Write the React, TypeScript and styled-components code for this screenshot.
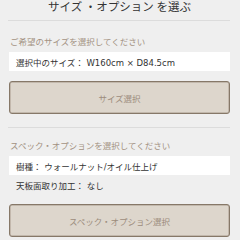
import React from "react";
import styled, { createGlobalStyle } from "styled-components";

const Global = createGlobalStyle`
  html, body { margin: 0; padding: 0; background: #efefef; }
  body { font-family: "Noto Sans CJK JP", "Noto Sans", sans-serif; }
`;

const Page = styled.div`
  width: 240px;
  height: 240px;
  overflow: hidden;
  background: #efefef;
  padding: 0 10px 0 9px;
  box-sizing: border-box;
`;

const Title = styled.h1`
  margin: 0;
  font-size: 11.5px;
  line-height: 13px;
  font-weight: 400;
  color: #333;
  text-align: center;
`;

const Divider = styled.hr<{ $after: number; $before: number }>`
  border: 0;
  height: 1px;
  background: #dcdcdc;
  margin: ${(p) => p.$before}px 0 ${(p) => p.$after}px -1px;
`;

const Label = styled.div`
  font-size: 8.5px;
  line-height: 12px;
  color: #a39282;
  padding-left: 1px;
  margin-bottom: 5px;
`;

const List = styled.div`
  display: flex;
  flex-direction: column;
`;

const Row = styled.div<{ $white?: boolean }>`
  height: 19px;
  display: flex;
  align-items: center;
  padding-left: 7px;
  font-family: "DejaVu Sans", "Noto Sans CJK JP", sans-serif;
  font-size: 8.5px;
  color: #333;
  background: ${(p) => (p.$white ? "#ffffff" : "transparent")};
`;

const Button = styled.button`
  display: flex;
  width: 100%;
  height: 33px;
  margin-top: 10px;
  align-items: center;
  justify-content: center;
  background: #ddd6cc;
  border: 1px solid #867868;
  border-radius: 3px;
  box-shadow: inset 0 0 0 0.5px #a89a8c;
  font-family: inherit;
  font-size: 8.5px;
  color: #9c8c7c;
  padding: 0;
`;

export default function App() {
  return (
    <>
      <Global />
      <Page>
        <Title>サイズ ・オプション を選ぶ</Title>
        <Divider $before={7} $after={14} />
        <Label>ご希望のサイズを選択してください</Label>
        <List>
          <Row $white>選択中のサイズ： W160cm × D84.5cm</Row>
        </List>
        <Button>サイズ選択</Button>
        <Divider $before={13} $after={11} />
        <Label>スペック・オプションを選択してください</Label>
        <List>
          <Row $white>樹種： ウォールナット/オイル仕上げ</Row>
          <Row>天板面取り加工： なし</Row>
        </List>
        <Button>スペック・オプション選択</Button>
      </Page>
    </>
  );
}
